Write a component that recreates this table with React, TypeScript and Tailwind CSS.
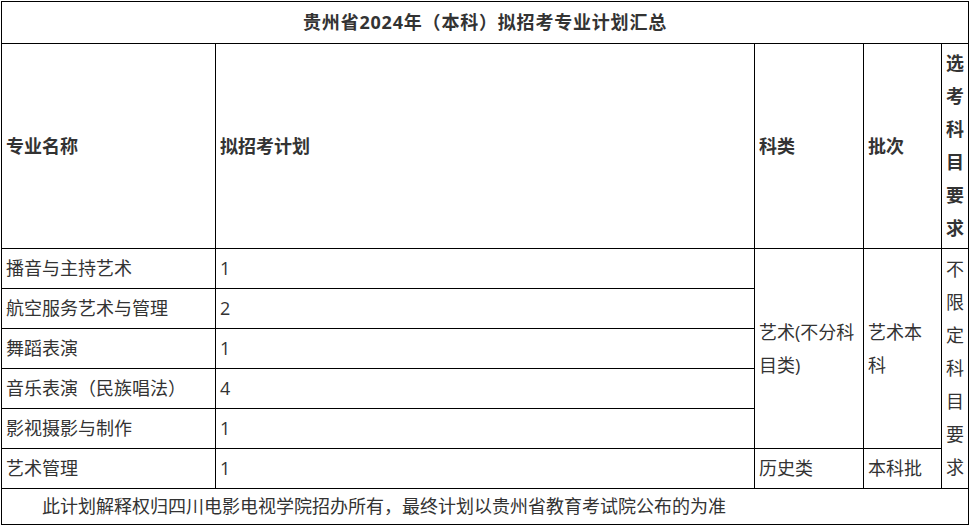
const rows = [
  { name: '播音与主持艺术', plan: '1' },
  { name: '航空服务艺术与管理', plan: '2' },
  { name: '舞蹈表演', plan: '1' },
  { name: '音乐表演（民族唱法）', plan: '4' },
  { name: '影视摄影与制作', plan: '1' },
];

const cell = 'border border-black px-[4px] py-0 align-middle text-left';

export default function App() {
  return (
    <div className="bg-white w-[969px] h-[528px] pt-px pl-px text-[#333] text-[18px] leading-[33px] [font-family:'Open_Sans','Noto_Sans_CJK_SC',sans-serif]">
      <table className="table-fixed border-collapse w-[967px]">
        <colgroup>
          <col className="w-[214px]" />
          <col className="w-[539px]" />
          <col className="w-[109px]" />
          <col className="w-[78px]" />
          <col className="w-[27px]" />
        </colgroup>
        <tbody>
          <tr className="h-[42px]">
            <td colSpan={5} className="border border-black text-center font-bold align-middle tracking-[0.8px]">
              贵州省2024年（本科）拟招考专业计划汇总
            </td>
          </tr>
          <tr className="h-[205px] font-bold">
            <td className={cell}>专业名称</td>
            <td className={cell}>拟招考计划</td>
            <td className={cell}>科类</td>
            <td className={cell}>批次</td>
            <td className={`${cell} break-all`}>选考科目要求</td>
          </tr>
          {rows.map((r, i) => (
            <tr key={r.name} className="h-[40px]">
              <td className={cell}>{r.name}</td>
              <td className={cell}>{r.plan}</td>
              {i === 0 && (
                <>
                  <td rowSpan={5} className={cell}>艺术(不分科目类)</td>
                  <td rowSpan={5} className={cell}>艺术本科</td>
                  <td rowSpan={6} className={`${cell} break-all`}>不限定科目要求</td>
                </>
              )}
            </tr>
          ))}
          <tr className="h-[40px]">
            <td className={cell}>艺术管理</td>
            <td className={cell}>1</td>
            <td className={cell}>历史类</td>
            <td className={cell}>本科批</td>
          </tr>
          <tr className="h-[36px]">
            <td colSpan={5} className={`${cell} indent-[36px]`}>
              此计划解释权归四川电影电视学院招办所有，最终计划以贵州省教育考试院公布的为准
            </td>
          </tr>
        </tbody>
      </table>
    </div>
  );
}
